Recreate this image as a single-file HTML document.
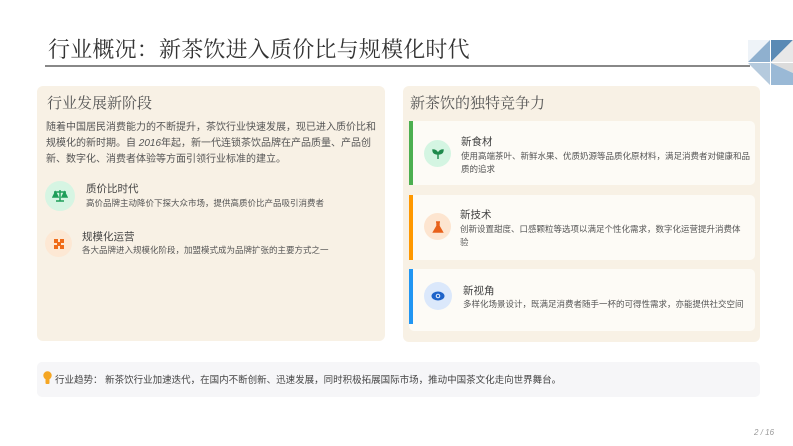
<!DOCTYPE html>
<html><head><meta charset="utf-8"><style>
*{margin:0;padding:0;box-sizing:border-box}
body{width:793px;height:446px;background:#fff;position:relative;overflow:hidden;font-family:"Liberation Sans","Noto Sans CJK SC",sans-serif;color:#444}
.abs{position:absolute}
.title{left:48px;top:33px;font-size:22px;font-family:"Liberation Serif","Noto Serif CJK SC",serif;color:#333;letter-spacing:0.2px;white-space:nowrap}
.line{left:45px;top:65px;width:705px;height:1.5px;background:#888}
.panel{background:#f8f1e5;border-radius:6px}
.h{font-size:15px;font-family:"Liberation Serif","Noto Serif CJK SC",serif;color:#555;white-space:nowrap}
.p{font-size:10px;line-height:16px;color:#555}
.t{font-size:10.5px;color:#444;white-space:nowrap}
.d{font-size:8.5px;color:#555;line-height:12.5px}
.circ{border-radius:50%;display:flex;align-items:center;justify-content:center}
.card{background:#fdfbf6;border-radius:5px;left:409px;width:346px}
.bar{width:4px;left:409px}
</style></head><body>
<div class="abs title">行业概况：新茶饮进入质价比与规模化时代</div>
<div class="abs line"></div>
<svg class="abs" style="left:748px;top:40px" width="45" height="50" viewBox="0 0 45 50">
<polygon points="0,22 22,0 0,0" fill="#eef3f8"/>
<polygon points="0,22 22,0 22,22" fill="#8fb0cf"/>
<polygon points="23,0 45,0 23,22" fill="#5a8ab5"/>
<polygon points="45,0 45,22 23,22" fill="#e8e8e8"/>
<polygon points="0,23 22,23 22,45" fill="#b5cadd"/>
<polygon points="23,23 45,23 45,33" fill="#dcdcdc"/>
<polygon points="23,23 45,33 45,45 23,45" fill="#9ab9d6"/>
</svg>

<div class="abs panel" style="left:37px;top:86px;width:348px;height:255px"></div>
<div class="abs h" style="left:47px;top:92px">行业发展新阶段</div>
<div class="abs p" style="left:46px;top:120px;width:332px">随着中国居民消费能力的不断提升，茶饮行业快速发展，现已进入质价比和规模化的新时期。自 <i>2016</i>年起，新一代连锁茶饮品牌在产品质量、产品创新、数字化、消费者体验等方面引领行业标准的建立。</div>
<div class="abs circ" style="left:45px;top:181px;width:30px;height:30px;background:#d6f5e3">
<svg width="16" height="14" viewBox="0 0 16 14"><path d="M8 1v11M2 3h12M4 12h8M3.5 3L1 8h5zM12.5 3L10 8h5z" stroke="#1f9e5a" stroke-width="1.5" fill="#1f9e5a"/></svg></div>
<div class="abs t" style="left:86px;top:181px">质价比时代</div>
<div class="abs d" style="left:86px;top:197px;white-space:nowrap">高价品牌主动降价下探大众市场，提供高质价比产品吸引消费者</div>
<div class="abs circ" style="left:45px;top:230px;width:27px;height:27px;background:#fde8d4">
<svg width="12" height="12" viewBox="0 0 12 12"><path d="M1 1h4v4H1zM7 1h4v4H7zM1 7h4v4H1zM7 7h4v4H7z" fill="#ef6c1a"/><rect x="4" y="4" width="4" height="4" fill="#ef6c1a"/></svg></div>
<div class="abs t" style="left:82px;top:229px">规模化运营</div>
<div class="abs d" style="left:82px;top:244px;white-space:nowrap">各大品牌进入规模化阶段，加盟模式成为品牌扩张的主要方式之一</div>

<div class="abs panel" style="left:403px;top:86px;width:357px;height:256px"></div>
<div class="abs h" style="left:410px;top:92px">新茶饮的独特竞争力</div>

<div class="abs card" style="top:121px;height:64px"></div>
<div class="abs bar" style="top:121px;height:64px;background:#4caf50"></div>
<div class="abs circ" style="left:424px;top:140px;width:27px;height:27px;background:#d4f5e2">
<svg width="12" height="12" viewBox="0 0 12 12"><path d="M6 11V6M6 6C5 3 3 2 1 2c0 3 2 4 5 4zM6 6c1-3 3-4 5-4 0 3-2 4-5 4z" stroke="#1f8a4c" stroke-width="1.4" fill="#1f8a4c"/></svg></div>
<div class="abs t" style="left:461px;top:134px">新食材</div>
<div class="abs d" style="left:461px;top:150px;width:290px">使用高端茶叶、新鲜水果、优质奶源等品质化原材料，满足消费者对健康和品质的追求</div>

<div class="abs card" style="top:195px;height:65px"></div>
<div class="abs bar" style="top:195px;height:65px;background:#ff9800"></div>
<div class="abs circ" style="left:424px;top:213px;width:27px;height:27px;background:#fde5d0">
<svg width="12" height="12" viewBox="0 0 12 12"><path d="M4 1h4M5 1v4L1.5 11h9L7 5V1" stroke="#e8611a" stroke-width="1.4" fill="#e8611a"/></svg></div>
<div class="abs t" style="left:460px;top:207px">新技术</div>
<div class="abs d" style="left:460px;top:223px;width:282px">创新设置甜度、口感颗粒等选项以满足个性化需求，数字化运营提升消费体验</div>

<div class="abs card" style="top:269px;height:62px"></div>
<div class="abs bar" style="top:269px;height:55px;background:#2196f3"></div>
<div class="abs circ" style="left:424px;top:282px;width:28px;height:28px;background:#dbe8fb">
<svg width="14" height="10" viewBox="0 0 14 10"><ellipse cx="7" cy="5" rx="6.5" ry="4.5" fill="#1e63c9"/><circle cx="7" cy="5" r="2.3" fill="#dbe8fb"/><circle cx="7" cy="5" r="1.2" fill="#1e63c9"/></svg></div>
<div class="abs t" style="left:463px;top:283px">新视角</div>
<div class="abs d" style="left:463px;top:298px;white-space:nowrap">多样化场景设计，既满足消费者随手一杯的可得性需求，亦能提供社交空间</div>

<div class="abs" style="left:37px;top:362px;width:723px;height:35px;background:#f6f6f8;border-radius:5px"></div>
<svg class="abs" style="left:43px;top:371px" width="9" height="14" viewBox="0 0 9 14"><circle cx="4.5" cy="4.5" r="4.2" fill="#f5a623"/><rect x="2.5" y="7" width="4" height="6" rx="1" fill="#f5a623"/></svg>
<div class="abs" style="left:55px;top:372px;font-size:9.5px;color:#444;white-space:nowrap">行业趋势： 新茶饮行业加速迭代，在国内不断创新、迅速发展，同时积极拓展国际市场，推动中国茶文化走向世界舞台。</div>
<div class="abs" style="left:754px;top:428px;font-size:8px;color:#999;font-style:italic;white-space:nowrap">2 / 16</div>
</body></html>
